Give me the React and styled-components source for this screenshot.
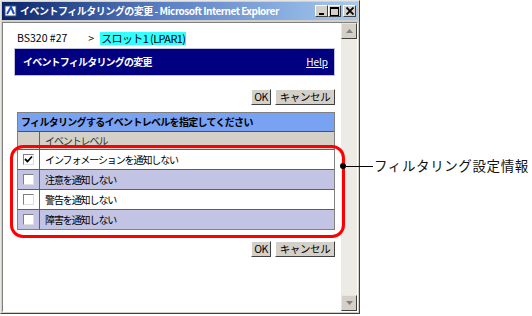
import React from 'react'
import styled, { createGlobalStyle } from 'styled-components'

const Global = createGlobalStyle`
  html, body {
    margin: 0;
    padding: 0;
    background: #ffffff;
  }
  body {
    font-family: "Noto Sans CJK JP", "Liberation Sans", sans-serif;
    line-height: 1;
  }
`

const levels = [
  { label: 'インフォメーションを通知しない', checked: true },
  { label: '注意を通知しない', checked: false },
  { label: '警告を通知しない', checked: false },
  { label: '障害を通知しない', checked: false },
]

const Page = () => {
  return (
    <Stage>
      <Global />
      <Window>
        <TitleBar>
          <TitleIcon>
            <svg width="14" height="14" viewBox="0 0 14 14">
              <rect x="1" y="2" width="11" height="10" fill="#ffffff" stroke="#405080" />
              <path d="M3 10 L7 3 L10 10" stroke="#2050c0" strokeWidth="2" fill="none" />
            </svg>
          </TitleIcon>
          <TitleText>イベントフィルタリングの変更 - Microsoft Internet Explorer</TitleText>
          <CaptionButtons>
            <CapButton>
              <svg width="8" height="8" viewBox="0 0 8 8"><rect x="1" y="6" width="5" height="2" fill="#000" /></svg>
            </CapButton>
            <CapButton>
              <svg width="9" height="9" viewBox="0 0 9 9"><rect x="0.5" y="0.5" width="8" height="8" fill="none" stroke="#000" /><rect x="0" y="0" width="9" height="2" fill="#000" /></svg>
            </CapButton>
            <CapButton gap>
              <svg width="8" height="8" viewBox="0 0 8 8"><path d="M0.5 0.5 L7.5 7.5 M7.5 0.5 L0.5 7.5" stroke="#000" strokeWidth="1.8" /></svg>
            </CapButton>
          </CaptionButtons>
        </TitleBar>
        <Client>
          <Content>
            <Crumbs>
              <span>BS320 #27</span>
              <Arrow>&gt;</Arrow>
              <Current>スロット1 (LPAR1)</Current>
            </Crumbs>
            <Banner>
              <span>イベントフィルタリングの変更</span>
              <HelpLink>Help</HelpLink>
            </Banner>
            <ButtonRow>
              <Btn>OK</Btn>
              <Btn wide>キャンセル</Btn>
            </ButtonRow>
            <Table>
              <Caption>フィルタリングするイベントレベルを指定してください</Caption>
              <Row bg="#d4d0c8" h={17}>
                <CheckCell />
                <LabelCell muted>イベントレベル</LabelCell>
              </Row>
              {levels.map((lv, i) => (
                <Row key={lv.label} bg={i % 2 ? '#c3c3e3' : '#ffffff'} h={19}>
                  <CheckCell>
                    <Box>{lv.checked && (
                      <svg width="9" height="9" viewBox="0 0 9 9"><path d="M1 4 L3.5 6.5 L8 1.5" stroke="#000" strokeWidth="1.8" fill="none" /></svg>
                    )}</Box>
                  </CheckCell>
                  <LabelCell>{lv.label}</LabelCell>
                </Row>
              ))}
            </Table>
            <ButtonRow bottom>
              <Btn>OK</Btn>
              <Btn wide>キャンセル</Btn>
            </ButtonRow>
          </Content>
          <ScrollBar>
            <ScrollBtn>
              <svg width="7" height="4" viewBox="0 0 7 4"><path d="M0 4 L3.5 0 L7 4 Z" fill="#808080" /></svg>
            </ScrollBtn>
            <Track />
            <ScrollBtn>
              <svg width="7" height="4" viewBox="0 0 7 4"><path d="M0 0 L3.5 4 L7 0 Z" fill="#808080" /></svg>
            </ScrollBtn>
          </ScrollBar>
        </Client>
      </Window>
      <Highlight />
      <Callout>
        <Dot />
        <Leader />
        <CalloutText>フィルタリング設定情報</CalloutText>
      </Callout>
    </Stage>
  )
}

const Stage = styled.div`
  position: relative;
  width: 532px;
  height: 316px;
  overflow: hidden;
`

const Window = styled.div`
  box-sizing: border-box;
  width: 360px;
  height: 314px;
  background: #d4d0c8;
  border: 1px solid;
  border-color: #e8e6e0 #404040 #404040 #e8e6e0;
  padding: 1px;
  display: flex;
  flex-direction: column;
`

const TitleBar = styled.div`
  height: 18px;
  display: flex;
  align-items: center;
  background: linear-gradient(to right, #0a246a 0%, #5a7fc4 45%, #a6caf0 100%);
  padding: 0 2px 0 2px;
`

const TitleIcon = styled.div`
  width: 16px;
  display: flex;
  align-items: center;
`

const TitleText = styled.div`
  flex: 1;
  color: #ffffff;
  font-size: 10px;
  font-weight: bold;
  white-space: nowrap;
  letter-spacing: -0.5px;
`

const CaptionButtons = styled.div`
  display: flex;
  align-items: center;
`

const CapButton = styled.div`
  box-sizing: border-box;
  width: 13px;
  height: 12px;
  margin-left: ${p => (p.gap ? '2px' : '0')};
  background: #d4d0c8;
  border: 1px solid;
  border-color: #ffffff #404040 #404040 #ffffff;
  display: flex;
  align-items: center;
  justify-content: center;
`

const Client = styled.div`
  flex: 1;
  display: flex;
  margin-top: 2px;
  border: 1px solid;
  border-color: #808080 #ffffff #ffffff #808080;
  background: #ffffff;
`

const Content = styled.div`
  flex: 1;
  padding: 7px 6px 0 9px;
  display: flex;
  flex-direction: column;
`

const Crumbs = styled.div`
  display: flex;
  align-items: center;
  height: 16px;
  padding-left: 5px;
  font-size: 10.5px;
  color: #000;
`

const Arrow = styled.span`
  margin-left: 21px;
  margin-right: 6px;
`

const Current = styled.span`
  background: #33ffff;
  color: #000;
  padding: 1px 1px;
  font-size: 11px;
  letter-spacing: -0.6px;
`

const Banner = styled.div`
  box-sizing: border-box;
  height: 28px;
  margin: 2px 0 0 2px;
  padding: 0 6px 0 8px;
  background: #000080;
  border: 1px solid #c0c0e0;
  display: flex;
  align-items: center;
  justify-content: space-between;
  color: #ffffff;
  font-size: 10px;
  font-weight: bold;
  letter-spacing: -0.8px;
`

const HelpLink = styled.span`
  font-weight: normal;
  font-size: 10px;
  letter-spacing: 0;
  text-decoration: underline;
`

const ButtonRow = styled.div`
  display: flex;
  justify-content: flex-end;
  gap: 4px;
  margin-top: ${p => (p.bottom ? '11px' : '13px')};
  margin-bottom: 7px;
`

const Btn = styled.div`
  box-sizing: border-box;
  height: 16px;
  min-width: ${p => (p.wide ? '60px' : '19px')};
  padding: 0 2px;
  background: #d4d0c8;
  border: 1px solid;
  border-color: #ffffff #404040 #404040 #ffffff;
  display: flex;
  align-items: center;
  justify-content: center;
  font-size: 10.5px;
  letter-spacing: -0.4px;
  color: #000;
`

const Table = styled.div`
  box-sizing: border-box;
  margin-left: 5px;
  border: 1px solid #808080;
  display: flex;
  flex-direction: column;
`

const Caption = styled.div`
  height: 18px;
  display: flex;
  align-items: center;
  padding-left: 3px;
  background: #79a2f2;
  border-bottom: 1px solid #505050;
  font-size: 10px;
  font-weight: bold;
  letter-spacing: -0.7px;
  color: #000;
`

const Row = styled.div`
  display: flex;
  height: ${p => p.h}px;
  background: ${p => p.bg};
  & + & {
    border-top: 1px solid #606060;
  }
`

const CheckCell = styled.div`
  width: 21px;
  border-right: 1px solid #606060;
  display: flex;
  align-items: center;
  justify-content: center;
`

const Box = styled.div`
  box-sizing: border-box;
  width: 11px;
  height: 11px;
  background: #ffffff;
  border: 1px solid;
  border-color: #808080 #e0e0e0 #e0e0e0 #808080;
  display: flex;
  align-items: center;
  justify-content: center;
`

const LabelCell = styled.div`
  flex: 1;
  display: flex;
  align-items: center;
  padding-left: 5px;
  font-size: 10px;
  letter-spacing: -1.1px;
  color: ${p => (p.muted ? '#333' : '#000')};
`

const ScrollBar = styled.div`
  width: 16px;
  display: flex;
  flex-direction: column;
`

const ScrollBtn = styled.div`
  box-sizing: border-box;
  height: 16px;
  background: #d4d0c8;
  border: 1px solid;
  border-color: #e8e6e0 #404040 #404040 #e8e6e0;
  display: flex;
  align-items: center;
  justify-content: center;
`

const Track = styled.div`
  flex: 1;
  background: #ecebe6;
`

const Highlight = styled.div`
  position: absolute;
  left: 10px;
  top: 145px;
  width: 329px;
  height: 87px;
  border: 3px solid #ff0000;
  border-radius: 13px;
`

const Callout = styled.div`
  position: absolute;
  left: 340px;
  top: 158px;
  height: 16px;
  display: flex;
  align-items: center;
`

const Dot = styled.div`
  width: 6px;
  height: 6px;
  border-radius: 50%;
  background: #000;
`

const Leader = styled.div`
  width: 27px;
  height: 1px;
  background: #000;
`

const CalloutText = styled.div`
  margin-left: 1px;
  font-size: 13.5px;
  color: #111;
  white-space: nowrap;
  letter-spacing: 0.6px;
`

export default Page
